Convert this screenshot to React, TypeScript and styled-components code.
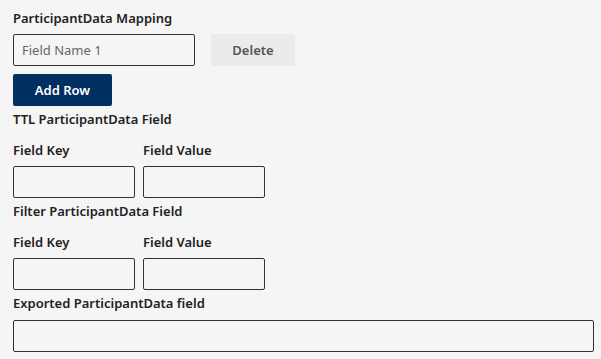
import styled, { createGlobalStyle } from "styled-components";

const GlobalStyle = createGlobalStyle`
  body {
    margin: 0;
    background: #f5f5f5;
    font-family: "Noto Sans", "Open Sans", sans-serif;
    color: #222;
  }
`;

const Page = styled.div`
  padding: 8px 7px 0 13px;
  display: flex;
  flex-direction: column;
`;

const SectionTitle = styled.div<{ $top?: number }>`
  font-size: 13px;
  font-weight: 600;
  line-height: 20px;
  margin-top: ${(p) => p.$top ?? 0}px;
`;

const Row = styled.div<{ $gap: number; $top?: number }>`
  display: flex;
  gap: ${(p) => p.$gap}px;
  margin-top: ${(p) => p.$top ?? 0}px;
`;

const Column = styled.div`
  display: flex;
  flex-direction: column;
  gap: 6px;
`;

const TextInput = styled.input<{ $width?: number }>`
  box-sizing: border-box;
  width: ${(p) => (p.$width ? `${p.$width}px` : "100%")};
  height: 32px;
  border: 1px solid #333;
  border-radius: 2px;
  background: transparent;
  padding: 0 8px;
  font-family: inherit;
  font-size: 13px;
  color: #222;
  outline: none;

  &::placeholder {
    color: #666;
  }
`;

const Button = styled.button<{ $primary?: boolean; $width: number }>`
  box-sizing: border-box;
  width: ${(p) => p.$width}px;
  height: 32px;
  border: none;
  border-radius: 2px;
  font-family: inherit;
  font-size: 13px;
  font-weight: 600;
  cursor: pointer;
  background: ${(p) => (p.$primary ? "#00305f" : "#ebebeb")};
  color: ${(p) => (p.$primary ? "#fff" : "#555")};
`;

const KeyValue = ({ top }: { top: number }) => (
  <Row $gap={8} $top={top}>
    <Column>
      <SectionTitle>Field Key</SectionTitle>
      <TextInput $width={122} />
    </Column>
    <Column>
      <SectionTitle>Field Value</SectionTitle>
      <TextInput $width={122} />
    </Column>
  </Row>
);

export default function App() {
  return (
    <>
      <GlobalStyle />
      <Page>
        <SectionTitle>ParticipantData Mapping</SectionTitle>
        <Row $gap={16} $top={6}>
          <TextInput $width={182} placeholder="Field Name 1" />
          <Button $width={84}>Delete</Button>
        </Row>
        <Row $gap={0} $top={8}>
          <Button $primary $width={99}>Add Row</Button>
        </Row>
        <SectionTitle $top={3}>TTL ParticipantData Field</SectionTitle>
        <KeyValue top={11} />
        <SectionTitle $top={3}>Filter ParticipantData Field</SectionTitle>
        <KeyValue top={11} />
        <SectionTitle $top={3}>Exported ParticipantData field</SectionTitle>
        <Row $gap={0} $top={7}>
          <TextInput />
        </Row>
      </Page>
    </>
  );
}
